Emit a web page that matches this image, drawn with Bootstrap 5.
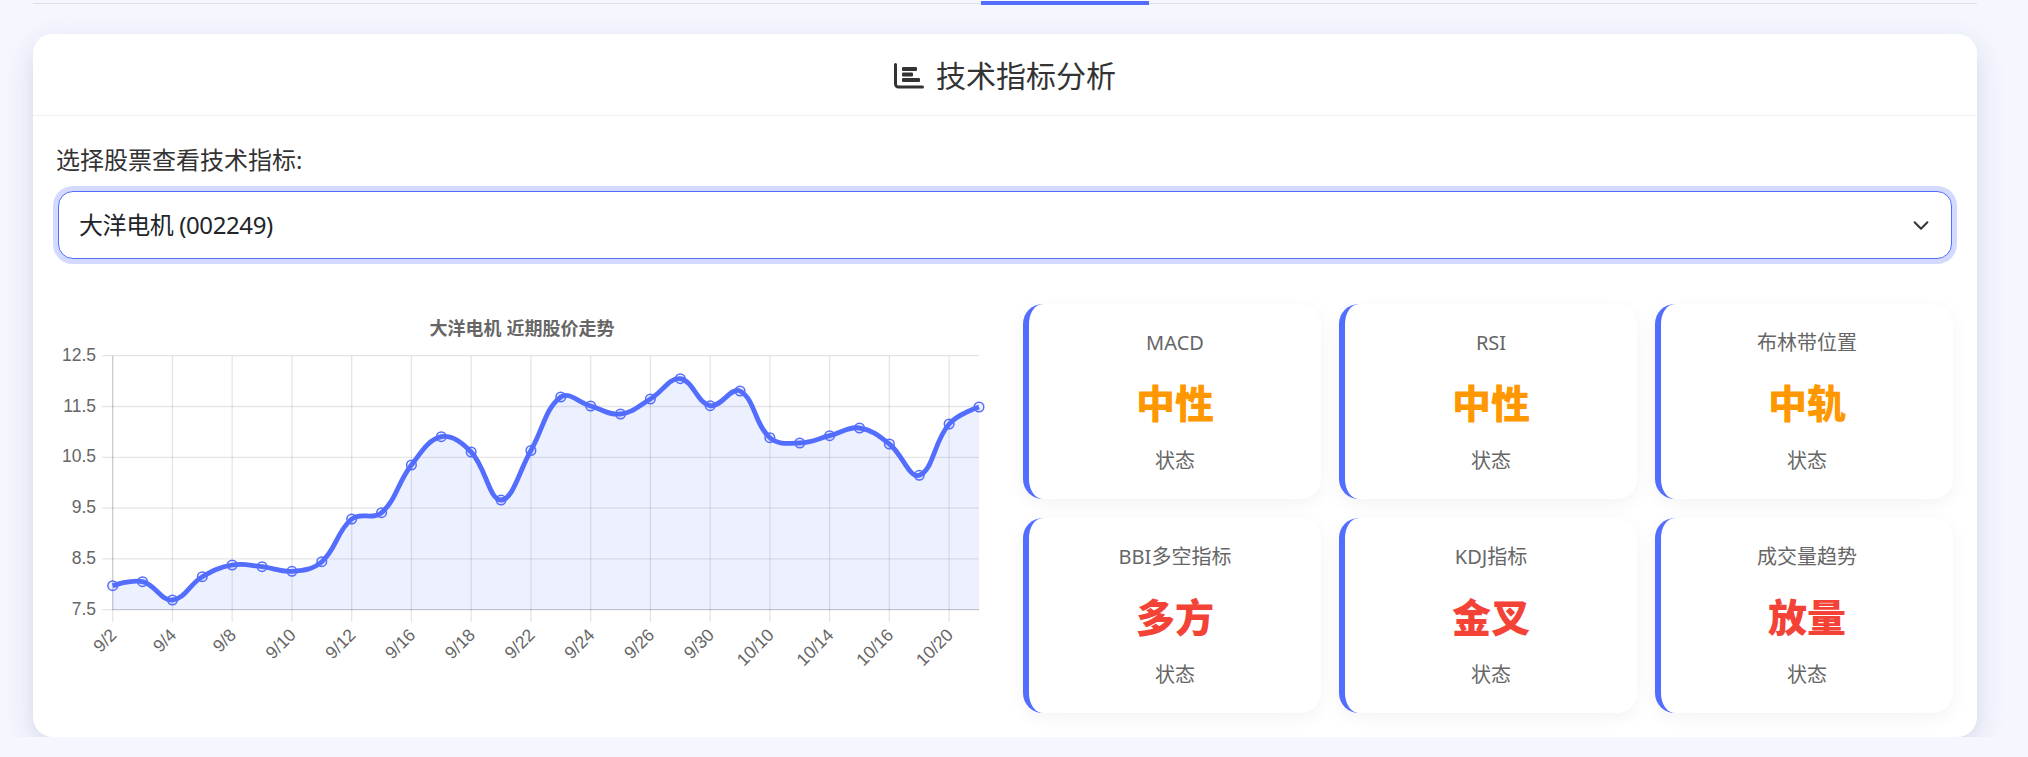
<!DOCTYPE html>
<html lang="zh-CN">
<head>
  <meta charset="UTF-8" />
  <meta name="viewport" content="width=device-width, initial-scale=1">
  <title>技术指标分析</title>
  <link href="https://cdn.jsdelivr.net/npm/bootstrap@5.3.3/dist/css/bootstrap.min.css" rel="stylesheet">
  <style>
    body { background: #f5f7ff; font-family: "Noto Sans", "Noto Sans CJK SC", sans-serif; color: #333; overflow: hidden; }
    .page-wrap { padding: 0 51px 0 33px; }
    .tab-strip { height: 5px; margin-top: 1px; margin-bottom: 28px; position: relative; }
    .tab-strip::before { content: ""; display: block; height: 1px; background: #dee2e6; transform: translateY(2px); }
    .tab-active { width: 168px; height: 4px; background: #536dfe; position: absolute; top: 0; left: 948px; }
    .panel { border: 0; border-radius: 20px; box-shadow: 0 10px 30px rgba(30, 40, 90, .15); }
    .panel-head { height: 82px; padding-top: 2px; background: #fff; border-bottom: 1px solid #f0f0f0; border-radius: 20px 20px 0 0; font-size: 30px; gap: 12px; }
    .panel-body { padding: 26px 25px 24px; }
    .pick-label { font-size: 24px; line-height: 36px; margin-bottom: 13px; margin-left: -2px; display: block; }
    .pick-select.form-select { height: 68px; font-size: 24px; letter-spacing: -.4px; color: #212529; border: 1px solid #536dfe; border-radius: 15px; padding: 0 60px 0 20px; box-shadow: 0 0 0 5px rgba(83, 109, 254, .25); background-size: 22px 17px; background-position: right 19px center; }
    .chart-row { margin-top: 45px; }
    .tile-grid { display: grid; grid-template-columns: repeat(3, 1fr); gap: 19px 18px; padding-left: 18px; margin-right: -1px; }
    .tile { height: 195px; background: #fff; border-left: 6px solid #536dfe; border-radius: 20px; box-shadow: 0 5px 18px rgba(0, 0, 0, .05); text-align: center; padding-top: 25px; }
    .tile-name { font-size: 20px; line-height: 28px; color: #666; }
    .tile-value { font-size: 39px; line-height: 46px; font-weight: 900; margin-top: 23px; }
    .tile-note { font-size: 20px; line-height: 28px; color: #666; margin-top: 21px; }
    .val-mid { color: #ff9800; }
    .val-up { color: #f44336; }
    #price-chart { display: block; }
    #price-chart text { font-family: "Liberation Sans", "Noto Sans CJK SC", sans-serif; fill: #666; font-size: 17.500px; }
    #price-chart .chart-title { font-weight: 700; font-size: 18px; }
  </style>
</head>
<body>
  <div class="page-wrap">
    <div class="tab-strip"><div class="tab-active"></div></div>

    <div class="card panel">
      <div class="panel-head d-flex align-items-center justify-content-center">
        <svg width="30" height="26" viewBox="0 0 30 26" fill="#333" aria-hidden="true">
          <path d="M0 1.5a1.5 1.5 0 0 1 3 0V21a1.5 1.5 0 0 0 1.500 1.500H28.500a1.500 1.500 0 0 1 0 3H4.500A4.500 4.500 0 0 1 0 21Z"/>
          <rect x="8" y="4" width="15" height="4" rx="1"/>
          <rect x="8" y="9.500" width="11" height="4" rx="1"/>
          <rect x="8" y="15" width="18" height="4" rx="1"/>
        </svg>
        <span>技术指标分析</span>
      </div>
      <div class="panel-body">
        <label class="pick-label" for="stock-select">选择股票查看技术指标:</label>
        <select class="form-select pick-select" id="stock-select">
          <option>大洋电机 (002249)</option>
        </select>

        <div class="row gx-0 chart-row">
          <div class="col-6">
            <svg id="price-chart" width="947" height="409" viewBox="58 304 947 409"></svg>
          </div>
          <div class="col-6">
            <div class="tile-grid">
              <div class="tile"><div class="tile-name">MACD</div><div class="tile-value val-mid">中性</div><div class="tile-note">状态</div></div>
              <div class="tile"><div class="tile-name">RSI</div><div class="tile-value val-mid">中性</div><div class="tile-note">状态</div></div>
              <div class="tile"><div class="tile-name">布林带位置</div><div class="tile-value val-mid">中轨</div><div class="tile-note">状态</div></div>
              <div class="tile"><div class="tile-name">BBI多空指标</div><div class="tile-value val-up">多方</div><div class="tile-note">状态</div></div>
              <div class="tile"><div class="tile-name">KDJ指标</div><div class="tile-value val-up">金叉</div><div class="tile-note">状态</div></div>
              <div class="tile"><div class="tile-name">成交量趋势</div><div class="tile-value val-up">放量</div><div class="tile-note">状态</div></div>
            </div>
          </div>
        </div>
      </div>
    </div>
  </div>

  <script>
    // y positions read off the picture, in page pixels
    const pointY = [585.7, 581.7, 600, 576.7, 565, 566.7, 571.3, 561.7, 519, 512.7, 465, 436.7, 452, 500, 450.5,
      397, 406, 414, 399, 378.7, 405.7, 391, 437.7, 443, 435.7, 428, 444, 475.3, 424, 407];
    const labels = ["9/2", "9/4", "9/8", "9/10", "9/12", "9/16", "9/18", "9/22", "9/24", "9/26", "9/30", "10/10", "10/14", "10/16", "10/20"];
    const yTicks = ["12.5", "11.5", "10.5", "9.5", "8.5", "7.5"];
    const left = 112.7, right = 979, top_ = 355.7, bottom = 609.7;
    const step = (right - left) / (pointY.length - 1);
    const pts = pointY.map((y, i) => ({ x: left + i * step, y }));

    // same curve as a line chart with tension 0.4
    function controls(p0, p1, p2, t) {
      const d01 = Math.hypot(p1.x - p0.x, p1.y - p0.y);
      const d12 = Math.hypot(p2.x - p1.x, p2.y - p1.y);
      if (!d01 || !d12) return { prev: p1, next: p1 };
      const fa = t * d01 / (d01 + d12), fb = t * d12 / (d01 + d12);
      return {
        prev: { x: p1.x - fa * (p2.x - p0.x), y: p1.y - fa * (p2.y - p0.y) },
        next: { x: p1.x + fb * (p2.x - p0.x), y: p1.y + fb * (p2.y - p0.y) }
      };
    }
    const ctrl = pts.map((p, i) => controls(pts[i - 1] || p, p, pts[i + 1] || p, 0.4));
    let curve = `M${pts[0].x} ${pts[0].y}`;
    for (let i = 1; i < pts.length; i++) {
      const a = ctrl[i - 1].next, b = ctrl[i].prev;
      curve += `C${a.x} ${a.y} ${b.x} ${b.y} ${pts[i].x} ${pts[i].y}`;
    }

    let svg = "";
    const grid = "rgba(0,0,0,.1)";
    yTicks.forEach((t, i) => {
      const y = top_ + i * (bottom - top_) / 5;
      svg += `<line x1="102" x2="${right}" y1="${y}" y2="${y}" stroke="${grid}" stroke-width="1.300"/>`;
      svg += `<text x="96" y="${y + 5}" text-anchor="end">${t}</text>`;
    });
    labels.forEach((t, i) => {
      const x = left + i * 2 * step;
      svg += `<line x1="${x}" x2="${x}" y1="${top_}" y2="622" stroke="${grid}" stroke-width="1.300"/>`;
      svg += `<text transform="translate(${x + 5} 636) rotate(-45)" text-anchor="end">${t}</text>`;
    });
    svg += `<line x1="${left}" x2="${left}" y1="${top_}" y2="${bottom}" stroke="rgba(0,0,0,.12)" stroke-width="1.300"/>`;
    svg += `<line x1="${left}" x2="${right}" y1="${bottom}" y2="${bottom}" stroke="rgba(0,0,0,.12)" stroke-width="1.300"/>`;
    svg += `<path d="${curve}L${right} ${bottom}L${left} ${bottom}Z" fill="rgba(83,109,254,.1)"/>`;
    svg += `<path d="${curve}" fill="none" stroke="#536dfe" stroke-width="4.800"/>`;
    pts.forEach(p => {
      svg += `<circle cx="${p.x}" cy="${p.y}" r="4.800" fill="rgba(83,109,254,.1)" stroke="#536dfe" stroke-width="1.500"/>`;
    });
    svg += `<text class="chart-title" x="522" y="335" text-anchor="middle">大洋电机 近期股价走势</text>`;
    document.getElementById("price-chart").innerHTML = svg;
  </script>
  <script src="https://cdn.jsdelivr.net/npm/bootstrap@5.3.3/dist/js/bootstrap.bundle.min.js"></script>
</body>
</html>
